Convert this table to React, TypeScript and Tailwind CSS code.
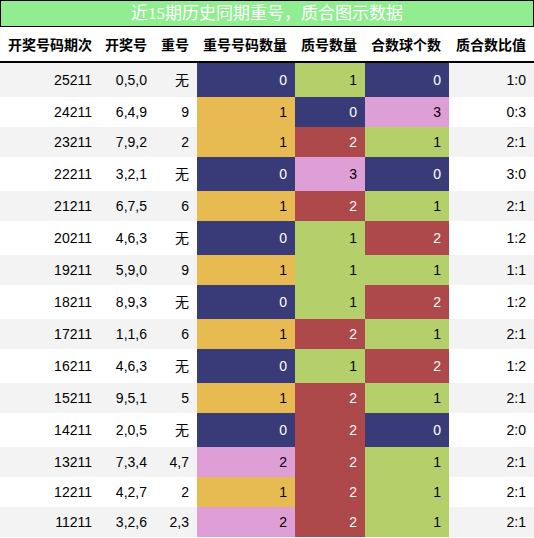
import React from 'react';

// value -> cell colour, per column palette
const repeatColors: Record<number, string> = {
  0: 'bg-[#393b79] text-white',
  1: 'bg-[#e7ba52] text-black',
  2: 'bg-[#de9ed6] text-black',
};

const countColors: Record<number, string> = {
  0: 'bg-[#393b79] text-white',
  1: 'bg-[#b5cf6b] text-black',
  2: 'bg-[#ad494a] text-white',
  3: 'bg-[#de9ed6] text-black',
};

const rows = [
  { issue: '25211', nums: '0,5,0', repeat: '无', rc: 0, prime: 1, composite: 0, ratio: '1:0' },
  { issue: '24211', nums: '6,4,9', repeat: '9', rc: 1, prime: 0, composite: 3, ratio: '0:3' },
  { issue: '23211', nums: '7,9,2', repeat: '2', rc: 1, prime: 2, composite: 1, ratio: '2:1' },
  { issue: '22211', nums: '3,2,1', repeat: '无', rc: 0, prime: 3, composite: 0, ratio: '3:0' },
  { issue: '21211', nums: '6,7,5', repeat: '6', rc: 1, prime: 2, composite: 1, ratio: '2:1' },
  { issue: '20211', nums: '4,6,3', repeat: '无', rc: 0, prime: 1, composite: 2, ratio: '1:2' },
  { issue: '19211', nums: '5,9,0', repeat: '9', rc: 1, prime: 1, composite: 1, ratio: '1:1' },
  { issue: '18211', nums: '8,9,3', repeat: '无', rc: 0, prime: 1, composite: 2, ratio: '1:2' },
  { issue: '17211', nums: '1,1,6', repeat: '6', rc: 1, prime: 2, composite: 1, ratio: '2:1' },
  { issue: '16211', nums: '4,6,3', repeat: '无', rc: 0, prime: 1, composite: 2, ratio: '1:2' },
  { issue: '15211', nums: '9,5,1', repeat: '5', rc: 1, prime: 2, composite: 1, ratio: '2:1' },
  { issue: '14211', nums: '2,0,5', repeat: '无', rc: 0, prime: 2, composite: 0, ratio: '2:0' },
  { issue: '13211', nums: '7,3,4', repeat: '4,7', rc: 2, prime: 2, composite: 1, ratio: '2:1' },
  { issue: '12211', nums: '4,2,7', repeat: '2', rc: 1, prime: 2, composite: 1, ratio: '2:1' },
  { issue: '11211', nums: '3,2,6', repeat: '2,3', rc: 2, prime: 2, composite: 1, ratio: '2:1' },
];

const headers = ['开奖号码期次', '开奖号', '重号', '重号号码数量', '质号数量', '合数球个数', '质合数比值'];

const cols = 'grid grid-cols-[100px_55px_42px_98px_70px_84px_85px]';

const App = () => {
  return (
    <div className="w-[534px] bg-white font-['Liberation_Sans','Noto_Sans_CJK_SC',sans-serif] text-[14px] text-black">
      <div className="h-[27px] border border-black bg-[#90ee90] flex items-center justify-center text-white text-[17px] font-['Liberation_Serif','Noto_Sans_CJK_SC',serif]">
        近15期历史同期重号，质合图示数据
      </div>

      <div className={`${cols} h-[36px] border-b-2 border-black font-bold font-['Noto_Sans_CJK_SC',sans-serif]`}>
        {headers.map((h) => (
          <div key={h} className="flex items-center justify-end pr-2 whitespace-nowrap">
            {h}
          </div>
        ))}
      </div>

      {rows.map((r, i) => (
        <div
          key={r.issue}
          className={`${cols} ${r.repeat === '无' ? 'h-[34px]' : 'h-[30px]'} ${i % 2 === 0 ? 'bg-[#f3f3f3]' : 'bg-white'}`}
        >
          <div className="flex items-center justify-end pr-2">{r.issue}</div>
          <div className="flex items-center justify-end pr-2">{r.nums}</div>
          <div className="flex items-center justify-end pr-2">{r.repeat}</div>
          <div className={`flex items-center justify-end pr-2 ${repeatColors[r.rc]}`}>{r.rc}</div>
          <div className={`flex items-center justify-end pr-2 ${countColors[r.prime]}`}>{r.prime}</div>
          <div className={`flex items-center justify-end pr-2 ${countColors[r.composite]}`}>{r.composite}</div>
          <div className="flex items-center justify-end pr-2">{r.ratio}</div>
        </div>
      ))}
    </div>
  );
};

export default App;
